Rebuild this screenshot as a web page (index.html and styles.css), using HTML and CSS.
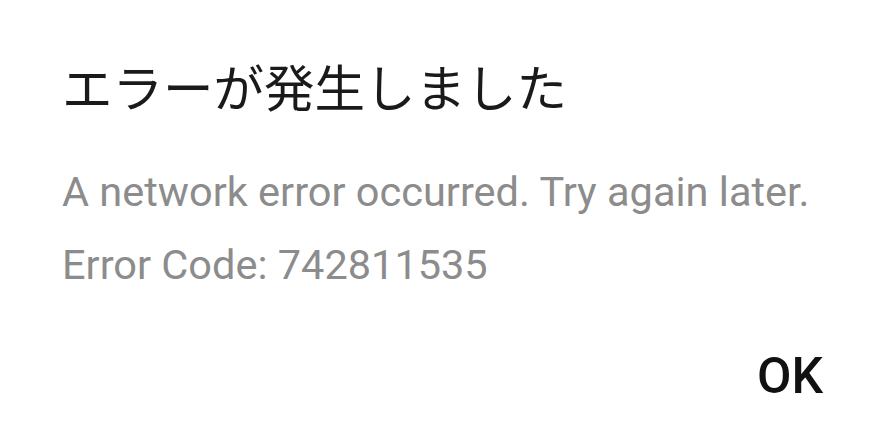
FILE: index.html
```html
<!DOCTYPE html>
<html lang="ja">
<head>
    <meta charset="UTF-8">
    <meta name="viewport" content="width=device-width, initial-scale=1.0">
    <title>エラー</title>
    <link rel="stylesheet" href="styles.css">
</head>
<body>

    <div class="dialog">
        <h1 class="dialog-title">エラーが発生しました</h1>

        <div class="dialog-message">
            <p>A network error occurred. Try again later.</p>
            <p>Error Code: 742811535</p>
        </div>

        <div class="dialog-actions">
            <button type="button" class="ok-button">OK</button>
        </div>
    </div>

</body>
</html>
```

FILE: styles.css
```css
body {
    margin: 0;
    padding: 0;
    background: #ffffff;
    font-family: Roboto, "Noto Sans CJK JP", sans-serif;
}
.dialog {
    width: 883px;
    height: 447px;
    box-sizing: border-box;
    padding: 52px 60px 0 62px;
    display: flex;
    flex-direction: column;
}
.dialog-title {
    margin: 0;
    font-family: "Noto Sans CJK JP", sans-serif;
    font-weight: 400;
    font-size: 50.5px;
    line-height: 66px;
    color: #1a1a1a;
}
.dialog-message {
    margin-top: 37px;
    color: #8c8c8c;
    font-size: 41.5px;
    line-height: 73px;
}
.dialog-message p {
    margin: 0;
}
.dialog-actions {
    display: flex;
    justify-content: flex-end;
    margin-top: 45px;
}
.ok-button {
    border: none;
    background: none;
    padding: 0;
    font-family: Roboto, sans-serif;
    font-weight: 500;
    font-size: 50px;
    line-height: 60px;
    color: #111111;
    cursor: pointer;
}
```
